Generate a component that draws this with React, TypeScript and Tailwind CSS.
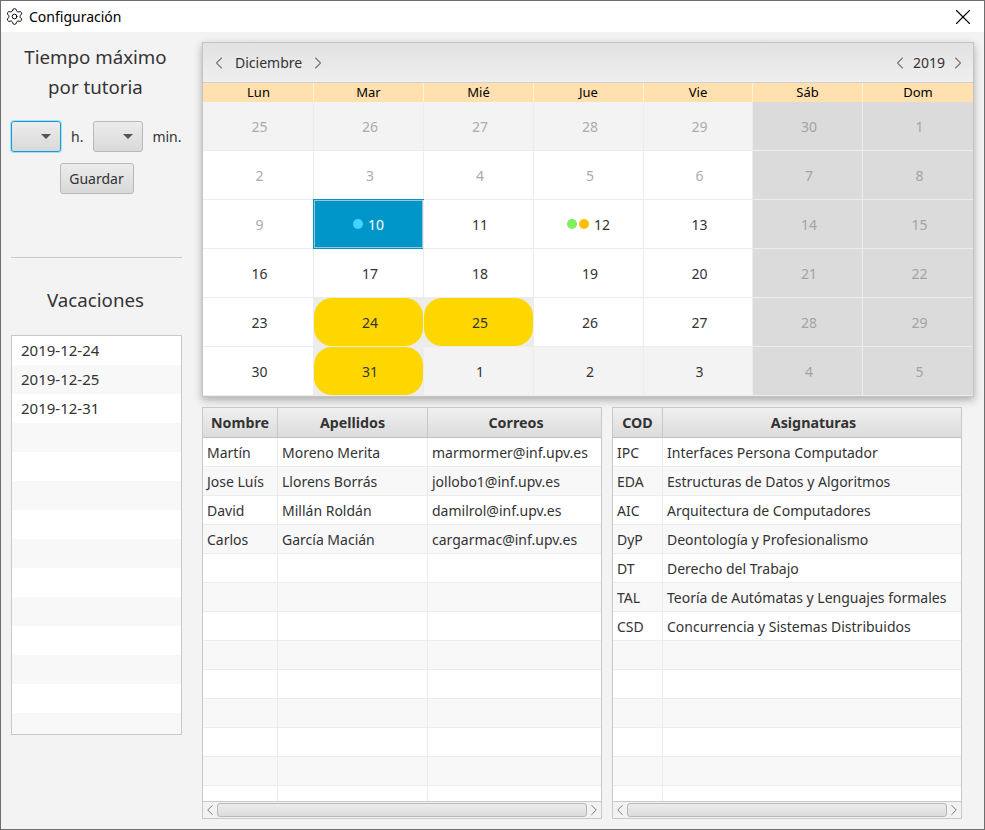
import { Settings, X, ChevronLeft, ChevronRight } from 'lucide-react';

const weekDays = ['Lun', 'Mar', 'Mié', 'Jue', 'Vie', 'Sáb', 'Dom'];

type Day = { n: number; out?: boolean; kind?: 'selected' | 'holiday' | 'dots' };

const weeks: Day[][] = [
  [{ n: 25, out: true }, { n: 26, out: true }, { n: 27, out: true }, { n: 28, out: true }, { n: 29, out: true }, { n: 30, out: true }, { n: 1, out: true }],
  [{ n: 2, out: true }, { n: 3, out: true }, { n: 4, out: true }, { n: 5, out: true }, { n: 6, out: true }, { n: 7, out: true }, { n: 8, out: true }],
  [{ n: 9, out: true }, { n: 10, kind: 'selected' }, { n: 11 }, { n: 12, kind: 'dots' }, { n: 13 }, { n: 14, out: true }, { n: 15, out: true }],
  [{ n: 16 }, { n: 17 }, { n: 18 }, { n: 19 }, { n: 20 }, { n: 21, out: true }, { n: 22, out: true }],
  [{ n: 23 }, { n: 24, kind: 'holiday' }, { n: 25, kind: 'holiday' }, { n: 26 }, { n: 27 }, { n: 28, out: true }, { n: 29, out: true }],
  [{ n: 30 }, { n: 31, kind: 'holiday' }, { n: 1 }, { n: 2 }, { n: 3 }, { n: 4, out: true }, { n: 5, out: true }],
];

function dayClass(w: number, d: number, day: Day) {
  if (d >= 5) return 'bg-[#dbdbdb] text-[#a3a3a3]';
  if (w === 0) return 'bg-[#f3f3f3] text-[#ababab]';
  if (w === 5 && d >= 2) return 'bg-[#f3f3f3] text-[#333333]';
  if (day.kind === 'holiday') return 'bg-[#ececec] text-[#333333]';
  if (w === 1 || (w === 2 && d === 0)) return 'bg-white text-[#ababab]';
  return 'bg-white text-[#333333]';
}

const teachers = [
  ['Martín', 'Moreno Merita', 'marmormer@inf.upv.es'],
  ['Jose Luís', 'Llorens Borrás', 'jollobo1@inf.upv.es'],
  ['David', 'Millán Roldán', 'damilrol@inf.upv.es'],
  ['Carlos', 'García Macián', 'cargarmac@inf.upv.es'],
];

const subjects = [
  ['IPC', 'Interfaces Persona Computador'],
  ['EDA', 'Estructuras de Datos y Algoritmos'],
  ['AIC', 'Arquitectura de Computadores'],
  ['DyP', 'Deontología y Profesionalismo'],
  ['DT', 'Derecho del Trabajo'],
  ['TAL', 'Teoría de Autómatas y Lenguajes formales'],
  ['CSD', 'Concurrencia y Sistemas Distribuidos'],
];

const holidays = ['2019-12-24', '2019-12-25', '2019-12-31'];

function ComboBox({ focused }: { focused?: boolean }) {
  return (
    <div
      className={`w-[50px] h-[31px] shrink-0 rounded-[3px] bg-gradient-to-b from-[#ececec] to-[#d9d9d9] flex items-center justify-end pr-[9px] ${
        focused ? 'border border-[#0f9ed8] shadow-[0_0_0_1px_#a8dcf2]' : 'border border-[#b8b8b8]'
      }`}
    >
      <div className="w-0 h-0 border-l-[5px] border-r-[5px] border-t-[5px] border-l-transparent border-r-transparent border-t-[#555555]" />
    </div>
  );
}

function DataTable({ widths, headers, rows, total }: { widths: string[]; headers: string[]; rows: string[][]; total: number }) {
  const filler = Array.from({ length: total }, (_, i) => rows[i] ?? headers.map(() => ''));
  return (
    <div className="h-[412px] flex flex-col border border-[#c8c8c8] bg-white">
      <div className="flex h-[30px] shrink-0 border-b border-[#c0c0c0] bg-gradient-to-b from-[#f0f0f0] to-[#dcdcdc]">
        {headers.map((h, i) => (
          <div key={h} className={`${widths[i]} flex items-center justify-center border-r border-[#c8c8c8] last:border-r-0 last:pl-[3px] font-bold text-[14.25px] text-[#333333]`}>
            {h}
          </div>
        ))}
      </div>
      <div className="flex-1 overflow-hidden">
        {filler.map((row, r) => (
          <div key={r} className={`flex h-[29px] border-b border-[#ececec] ${r % 2 ? 'bg-[#f8f8f8]' : 'bg-white'}`}>
            {row.map((c, i) => (
              <div key={i} className={`${widths[i]} flex items-center pl-[4px] border-r border-[#ececec] last:border-r-0 text-[#333333] whitespace-nowrap overflow-hidden`}>
                {c}
              </div>
            ))}
          </div>
        ))}
      </div>
      <div className="h-[17px] shrink-0 flex items-center border-t border-[#c8c8c8] bg-[#f2f2f2] text-[#777777]">
        <ChevronLeft size={18} strokeWidth={1.3} className="-mx-[2px]" />
        <div className="flex-1 h-[14px] rounded-[3px] border border-[#b8b8b8] bg-gradient-to-b from-[#ececec] to-[#dcdcdc]" />
        <ChevronRight size={18} strokeWidth={1.3} className="-mx-[2px]" />
      </div>
    </div>
  );
}

export default function App() {
  return (
    <div className="w-[985px] h-[830px] flex flex-col border border-[#6e6e6e] bg-[#f3f3f3] text-[14px] text-[#333333] font-['Noto_Sans',sans-serif] overflow-hidden">
      {/* Title bar */}
      <div className="h-[31px] shrink-0 bg-white flex items-center pl-[4px] pr-[8px] text-black">
        <Settings size={19} strokeWidth={1.2} />
        <span className="ml-[5px] text-[14px]">Configuración</span>
        <X size={26} strokeWidth={1} className="ml-auto" />
      </div>

      <div className="flex-1 flex pl-[10px] pt-[10px]">
        {/* Left column */}
        <div className="w-[171px] shrink-0 flex flex-col items-center">
          <div className="text-[18.7px] leading-[30px] text-center pr-[2px]">
            Tiempo máximo
            <br />
            por tutoria
          </div>
          <div className="w-full flex items-center mt-[19px] whitespace-nowrap">
            <ComboBox focused />
            <span className="ml-[10px]">h.</span>
            <div className="ml-[10px]">
              <ComboBox />
            </div>
            <span className="ml-[9px]">min.</span>
          </div>
          <div className="mt-[11px] h-[31px] w-[74px] rounded-[3px] border border-[#b8b8b8] bg-gradient-to-b from-[#ececec] to-[#d9d9d9] flex items-center justify-center">
            Guardar
          </div>
          <div className="w-full h-px bg-[#c8c8c8] mt-[63px]" />
          <div className="text-[18.7px] mt-[27px] leading-[30px] pr-[2px]">Vacaciones</div>
          <div className="w-full h-[400px] mt-[20px] border border-[#c8c8c8] bg-white overflow-hidden">
            {Array.from({ length: 14 }, (_, i) => (
              <div key={i} className={`h-[29px] flex items-center pl-[9px] text-[15px] ${i % 2 ? 'bg-[#f8f8f8]' : 'bg-white'}`}>
                {holidays[i]}
              </div>
            ))}
          </div>
        </div>

        {/* Right column */}
        <div className="ml-[20px] w-[772px]">
          {/* Calendar */}
          <div className="h-[355px] border border-[#c4c4c4] shadow-[0_3px_8px_rgba(0,0,0,0.3)] flex flex-col">
            <div className="h-[39px] shrink-0 bg-gradient-to-b from-[#e2e2e2] to-[#efefef] flex items-center pl-[6px] pr-[5px]">
              <ChevronLeft size={20} strokeWidth={1.3} className="text-[#777777]" />
              <span className="ml-[6px]">Diciembre</span>
              <ChevronRight size={20} strokeWidth={1.3} className="ml-[6px] text-[#777777]" />
              <ChevronLeft size={20} strokeWidth={1.3} className="ml-auto text-[#777777]" />
              <span className="ml-[3px]">2019</span>
              <ChevronRight size={20} strokeWidth={1.3} className="ml-[3px] text-[#777777]" />
            </div>
            <div className="grid grid-cols-[110px_110px_110px_110px_109px_110px_111px] h-[20px] shrink-0 bg-[#ffe0ae] border-t border-[#d0d0d0] text-[13px] text-black">
              {weekDays.map((d, i) => (
                <div key={d} className={`flex items-center justify-center ${i > 0 ? 'border-l border-[#fff2dc]' : 'pl-[1px]'}`}>
                  {d}
                </div>
              ))}
            </div>
            <div className="flex-1 grid grid-cols-[110px_110px_110px_110px_109px_110px_111px] grid-rows-6">
              {weeks.map((week, w) =>
                week.map((day, d) => (
                  <div
                    key={`${w}-${d}`}
                    className={`relative flex items-center justify-center border-b border-[#ececec] ${d > 0 ? 'border-l' : ''} ${day.kind === undefined ? 'pl-[3px]' : ''} ${dayClass(w, d, day)}`}
                  >
                    {day.kind === 'selected' && (
                      <div className="absolute inset-0 bg-[#0096c9] border border-[#a0c4d4] outline outline-1 outline-[#0096c9] flex items-center justify-center gap-[5px] text-white">
                        <span className="w-[10px] h-[10px] rounded-full bg-[#45d4ff]" />
                        {day.n}
                      </div>
                    )}
                    {day.kind === 'holiday' && (
                      <div className="absolute inset-0 rounded-[18px] bg-[#ffd700] flex items-center justify-center pl-[3px] text-[#333333]">
                        {day.n}
                      </div>
                    )}
                    {day.kind === 'dots' && (
                      <div className="flex items-center gap-[2px]">
                        <span className="w-[10px] h-[10px] rounded-full bg-[#7df25c]" />
                        <span className="w-[10px] h-[10px] rounded-full bg-[#ffbf00]" />
                        <span className="ml-[3px]">{day.n}</span>
                      </div>
                    )}
                    {day.kind === undefined && day.n}
                  </div>
                ))
              )}
            </div>
          </div>

          {/* Tables */}
          <div className="flex mt-[10px]">
            <div className="w-[400px]">
              <DataTable
                widths={['w-[75px]', 'w-[150px]', 'w-[173px]']}
                headers={['Nombre', 'Apellidos', 'Correos']}
                rows={teachers}
                total={13}
              />
            </div>
            <div className="w-[350px] ml-[10px]">
              <DataTable
                widths={['w-[50px]', 'w-[298px]']}
                headers={['COD', 'Asignaturas']}
                rows={subjects}
                total={13}
              />
            </div>
          </div>
        </div>
      </div>
    </div>
  );
}
